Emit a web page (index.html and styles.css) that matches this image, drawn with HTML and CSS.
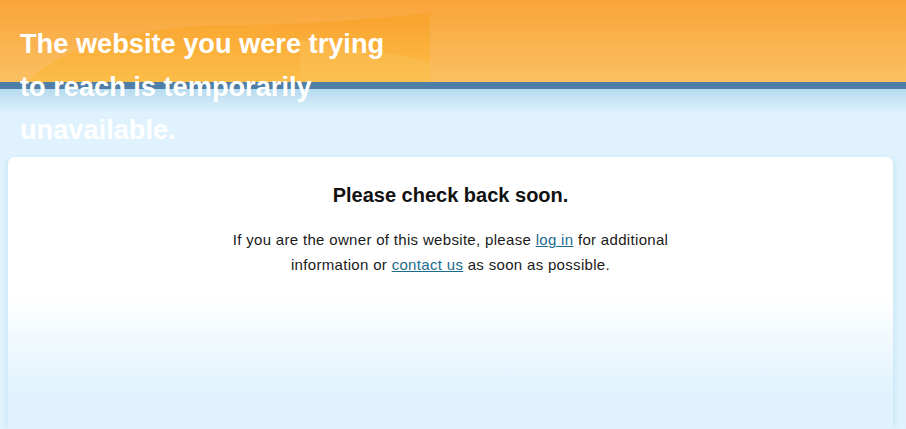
FILE: index.html
```html
<!DOCTYPE html>
<html lang="en">

<head>
    <meta charset="UTF-8">
    <title>Site Temporarily Unavailable</title>
    <link rel="stylesheet" href="styles.css">
</head>

<body>
    <!-- orange banner wave, sits behind the title -->
    <svg class="wave" viewBox="0 0 906 82" preserveAspectRatio="none">
        <defs>
            <linearGradient id="waveFill" x1="0" y1="0" x2="0" y2="1">
                <stop offset="0" stop-color="#f8a22a" />
                <stop offset="1" stop-color="#fcbd44" />
            </linearGradient>
        </defs>
        <path d="M28,82 C60,46 140,26 225,25 C300,25 360,20 430,13 L430,82 Z" fill="url(#waveFill)" opacity="0.85" />
        <path d="M300,40 C350,45 400,55 430,62 L430,82 L300,82 Z" fill="#fdc660" opacity="0.35" />
    </svg>

    <div class="page">
        <h1 class="title">The website you were trying to reach is temporarily unavailable.</h1>

        <div class="card">
            <h2>Please check back soon.</h2>
            <p>If you are the owner of this website, please <a href="#">log in</a> for additional
                information or <a href="#">contact us</a> as soon as possible.</p>
        </div>
    </div>
</body>

</html>
```

FILE: styles.css
```css
html {
    background: #dff2fd;
}

body {
    margin: 0;
    height: 429px;
    overflow: hidden;
    font-family: "Liberation Sans", Arial, sans-serif;
    background:
        linear-gradient(#f9a43a, #fbc062) 0 0 / 100% 82px no-repeat,
        linear-gradient(#4f7ea6, #4f7ea6) 0 82px / 100% 7px no-repeat,
        linear-gradient(#b6dbef, #dff2fd) 0 89px / 100% 24px no-repeat,
        #dff2fd;
}

.wave {
    position: absolute;
    top: 0;
    left: 0;
    width: 906px;
    height: 82px;
}

.page {
    position: relative;
    padding: 22px 13px 0 8px;
}

.title {
    margin: 0 0 0 12px;
    max-width: 390px;
    color: #fff;
    font-size: 27.2px;
    line-height: 43px;
    font-weight: bold;
}

.card {
    margin-top: 6px;
    height: 272px;
    padding-top: 26px;
    box-sizing: border-box;
    border-radius: 7px 7px 0 0;
    text-align: center;
    background: linear-gradient(#fff 0px, #fff 140px, #dff2fd 240px, #dff2fd 100%);
    box-shadow: -4px 0 4px -2px rgba(175, 218, 240, 0.4), 4px 0 4px -2px rgba(175, 218, 240, 0.4);
}

.card h2 {
    margin: 0;
    font-size: 20px;
    line-height: 24px;
    color: #111;
}

.card p {
    max-width: 460px;
    margin: 20px auto 0;
    font-size: 15px;
    line-height: 25px;
    letter-spacing: 0.32px;
    color: #1a1a1a;
}

.card a {
    color: #1c6b8e;
}
```
